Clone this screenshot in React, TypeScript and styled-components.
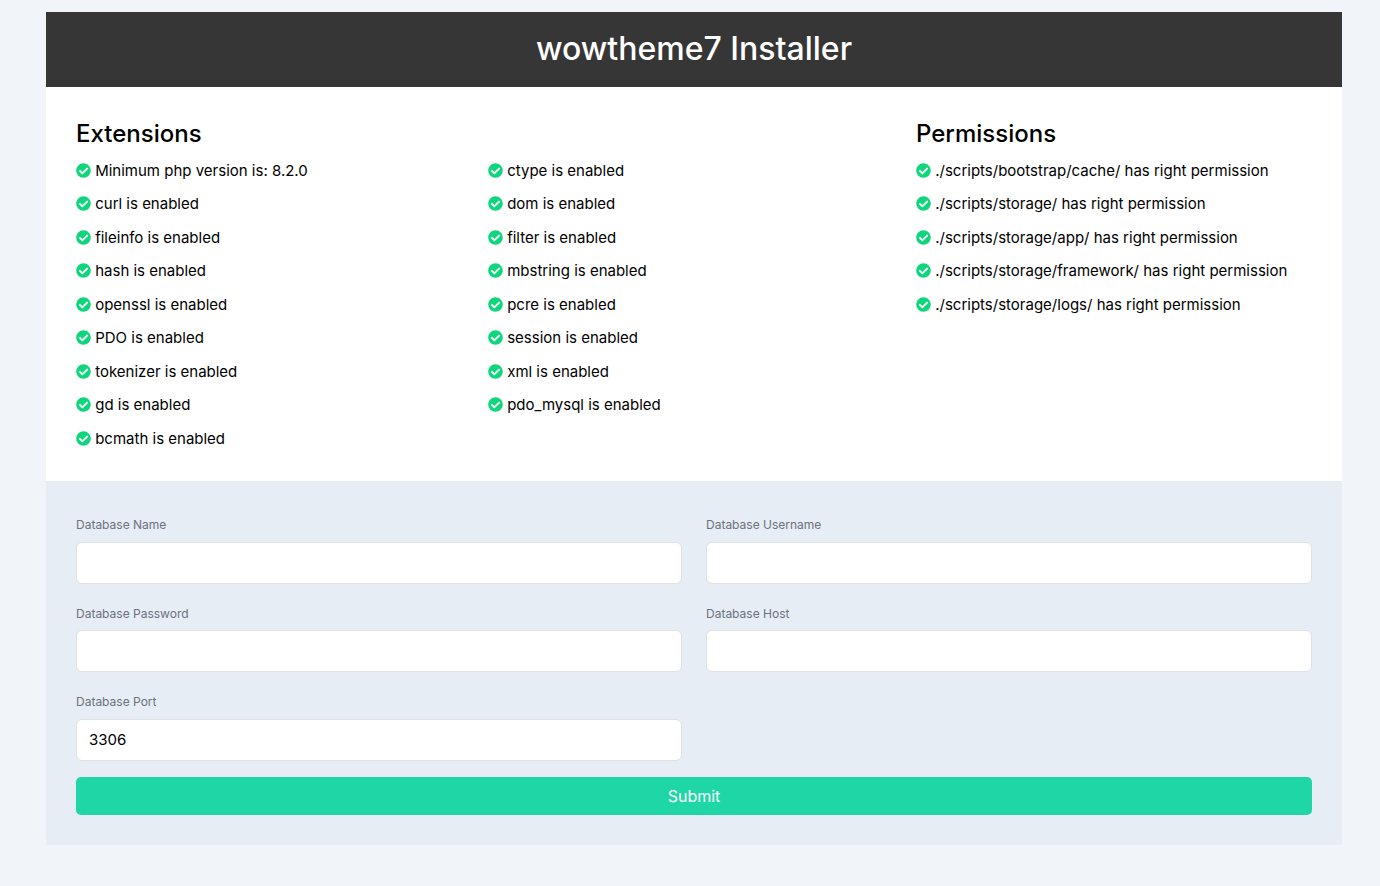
import { createGlobalStyle, styled } from "styled-components";
import { FaCheckCircle } from "react-icons/fa";

const extensions = [
  "Minimum php version is: 8.2.0",
  "ctype is enabled",
  "curl is enabled",
  "dom is enabled",
  "fileinfo is enabled",
  "filter is enabled",
  "hash is enabled",
  "mbstring is enabled",
  "openssl is enabled",
  "pcre is enabled",
  "PDO is enabled",
  "session is enabled",
  "tokenizer is enabled",
  "xml is enabled",
  "gd is enabled",
  "pdo_mysql is enabled",
  "bcmath is enabled",
];

const permissions = [
  "./scripts/bootstrap/cache/ has right permission",
  "./scripts/storage/ has right permission",
  "./scripts/storage/app/ has right permission",
  "./scripts/storage/framework/ has right permission",
  "./scripts/storage/logs/ has right permission",
];

const fields = [
  { label: "Database Name", value: "" },
  { label: "Database Username", value: "" },
  { label: "Database Password", value: "" },
  { label: "Database Host", value: "" },
  { label: "Database Port", value: "3306" },
];

function Check({ text }: { text: string }) {
  return (
    <CheckRow>
      <CheckIcon />
      {text}
    </CheckRow>
  );
}

export default function App() {
  return (
    <>
      <GlobalStyle />
      <Page>
        <Header>wowtheme7 Installer</Header>
        <Requirements>
          <section>
            <Heading>Extensions</Heading>
            <ExtensionList>
              {extensions.map((text) => (
                <Check key={text} text={text} />
              ))}
            </ExtensionList>
          </section>
          <section>
            <Heading>Permissions</Heading>
            <ul>
              {permissions.map((text) => (
                <Check key={text} text={text} />
              ))}
            </ul>
          </section>
        </Requirements>
        <Form>
          <FieldGrid>
            {fields.map((field) => (
              <Field key={field.label}>
                <Label>{field.label}</Label>
                <Input type="text" defaultValue={field.value} />
              </Field>
            ))}
          </FieldGrid>
          <Submit type="button">Submit</Submit>
        </Form>
      </Page>
    </>
  );
}

const GlobalStyle = createGlobalStyle`
  * {
    box-sizing: border-box;
  }

  body {
    margin: 0;
    background: #f1f5f9;
    color: #000;
    font-family: Inter, "Noto Sans", sans-serif;
  }

  ul {
    margin: 0;
    padding: 0;
    list-style: none;
  }
`;

const Page = styled.main`
  width: 1296px;
  margin-left: 46px;
  padding: 12px 0 41px;
`;

const Header = styled.h1`
  margin: 0;
  height: 75px;
  background: #363636;
  color: #fff;
  font-size: 32px;
  font-weight: 500;
  line-height: 73px;
  text-align: center;
`;

const Requirements = styled.div`
  display: grid;
  grid-template-columns: 840px 1fr;
  height: 394px;
  padding: 30px 30px 0;
  background: #fff;
`;

const Heading = styled.h2`
  margin: 0 0 8.5px;
  font-size: 24px;
  font-weight: 500;
  line-height: 34px;
`;

const ExtensionList = styled.ul`
  display: grid;
  grid-template-columns: 412px 1fr;
`;

const CheckRow = styled.li`
  display: flex;
  align-items: center;
  gap: 4.2px;
  height: 22.5px;
  margin-bottom: 11px;
  font-size: 15px;
  line-height: 22.5px;
`;

const CheckIcon = styled(FaCheckCircle)`
  flex: none;
  width: 15px;
  height: 15px;
  margin-bottom: 0.6px;
  color: #0fd67c;
`;

const Form = styled.form`
  padding: 31.2px 30px 30px;
  background: #e7edf4;
`;

const FieldGrid = styled.div`
  display: grid;
  grid-template-columns: 1fr 1fr;
  column-gap: 24px;
  row-gap: 16.8px;
  margin-bottom: 16px;
`;

const Field = styled.div`
  display: flex;
  flex-direction: column;
`;

const Label = styled.label`
  margin-bottom: 3.7px;
  color: #6b7280;
  font-size: 12px;
  line-height: 26px;
`;

const Input = styled.input`
  width: 100%;
  height: 42px;
  padding: 0 12px;
  border: 1px solid #dee2e6;
  border-radius: 6px;
  background: #fff;
  color: #000;
  font-family: inherit;
  font-size: 15px;
  outline: none;
`;

const Submit = styled.button`
  display: block;
  width: 100%;
  height: 38px;
  border: 0;
  border-radius: 5px;
  background: #1ed6a6;
  color: #fff;
  font-family: inherit;
  font-size: 16px;
`;
